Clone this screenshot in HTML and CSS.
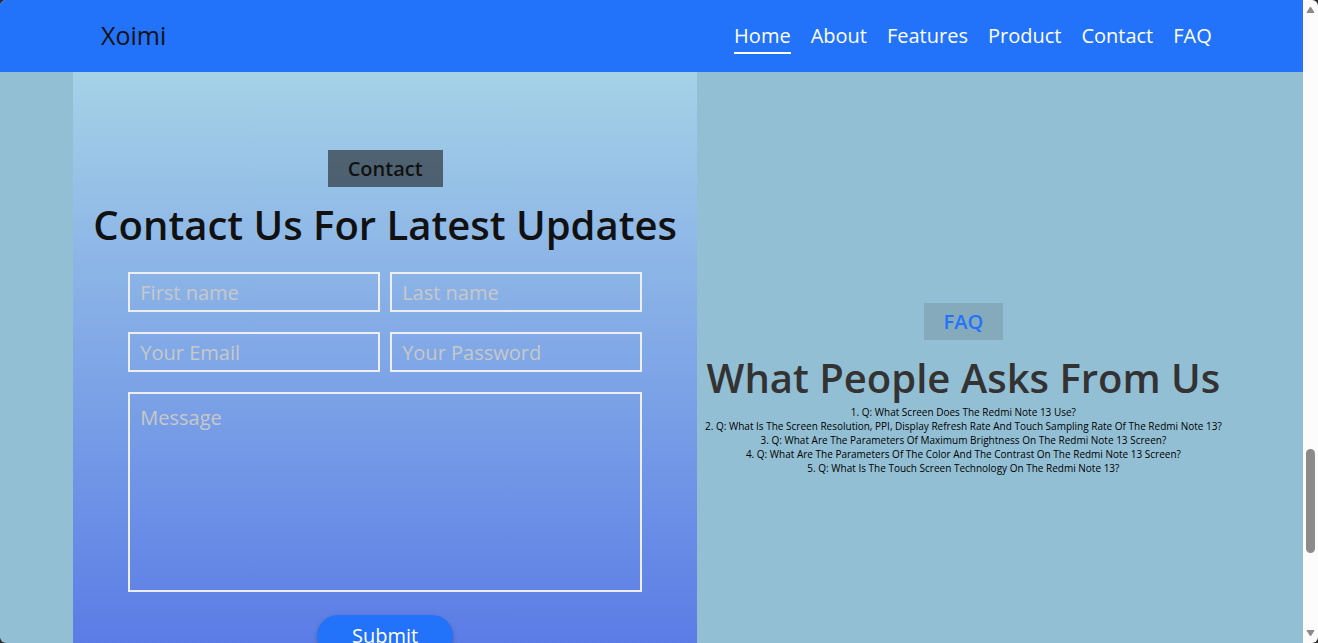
FILE: index.html
```html
<!DOCTYPE html>
<html lang="en">
<head>
<meta charset="utf-8">
<title>Xoimi</title>
<link rel="stylesheet" href="styles.css">
</head>
<body>
<div class="window">
  <div class="page">
    <header class="header">
      <a class="logo" href="#">Xoimi</a>
      <nav class="nav">
        <a class="nav-link active" href="#home">Home</a>
        <a class="nav-link" href="#about">About</a>
        <a class="nav-link" href="#features">Features</a>
        <a class="nav-link" href="#product">Product</a>
        <a class="nav-link" href="#contact">Contact</a>
        <a class="nav-link" href="#faq">FAQ</a>
      </nav>
    </header>
    <main class="main">
      <section class="contact" id="contact">
        <p class="tag tag-dark">Contact</p>
        <h2 class="title">Contact Us For Latest Updates</h2>
        <form class="form">
          <input class="field" type="text" placeholder="First name" aria-label="First name">
          <input class="field" type="text" placeholder="Last name" aria-label="Last name">
          <input class="field" type="email" placeholder="Your Email" aria-label="Your Email">
          <input class="field" type="password" placeholder="Your Password" aria-label="Your Password">
          <textarea class="field message" placeholder="Message" aria-label="Message"></textarea>
          <button class="submit" type="submit">Submit</button>
        </form>
      </section>
      <section class="faq" id="faq">
        <p class="tag tag-light">FAQ</p>
        <h2 class="title title-soft">What People Asks From Us</h2>
        <ul class="questions">
          <li>1. Q: What Screen Does The Redmi Note 13 Use?</li>
          <li>2. Q: What Is The Screen Resolution, PPI, Display Refresh Rate And Touch Sampling Rate Of The Redmi Note 13?</li>
          <li>3. Q: What Are The Parameters Of Maximum Brightness On The Redmi Note 13 Screen?</li>
          <li>4. Q: What Are The Parameters Of The Color And The Contrast On The Redmi Note 13 Screen?</li>
          <li>5. Q: What Is The Touch Screen Technology On The Redmi Note 13?</li>
        </ul>
      </section>
    </main>
  </div>
  <div class="scrollbar" aria-hidden="true">
    <svg class="arrow" viewBox="0 0 9 8"><path d="M4.5 1 8 6.5H1Z" fill="#8b8b8b" stroke="#8b8b8b" stroke-linejoin="round"/></svg>
    <div class="track"><div class="thumb"></div></div>
    <svg class="arrow" viewBox="0 0 9 8"><path d="M4.5 7 1 1.5H8Z" fill="#8b8b8b" stroke="#8b8b8b" stroke-linejoin="round"/></svg>
  </div>
</div>
</body>
</html>
```
FILE: styles.css
```css
* {
  box-sizing: border-box;
  margin: 0;
  padding: 0;
}

body {
  background: #2b2b2b;
  font-family: "Open Sans", sans-serif;
  font-size: 20px;
  overflow: hidden;
}

a {
  text-decoration: none;
}

.window {
  display: grid;
  grid-template-columns: minmax(0, 1fr) 15px;
  height: 100vh;
  border-radius: 6px;
  overflow: hidden;
}

.page {
  display: flex;
  flex-direction: column;
  min-height: 0;
  overflow: hidden;
  background: #93bfd4;
}

.header {
  display: flex;
  flex: none;
  align-items: center;
  justify-content: space-between;
  height: 72px;
  padding: 0 7%;
  padding-left: 101px;
  background: #2273f9;
}

.logo {
  padding-bottom: 2px;
  color: #111;
  font-size: 25px;
}

.nav {
  display: flex;
  gap: 20px;
}

.nav-link {
  padding: 2px 0;
  border-bottom: 2px solid transparent;
  border-top: 2px solid transparent;
  color: #fff;
  line-height: 28px;
}

.nav-link.active {
  border-bottom-color: #fff;
}

.main {
  display: flex;
  flex: none;
  justify-content: center;
}

.contact {
  display: flex;
  flex-direction: column;
  align-items: center;
  padding: 78px 20px 48px;
  background: linear-gradient(#a5d2e7, #5373e6);
}

.faq {
  display: flex;
  flex-direction: column;
  align-items: center;
  justify-content: center;
  padding: 0 8px;
}

.tag {
  padding: 5px 20px;
  font-weight: 600;
  line-height: 27px;
}

.tag-dark {
  background: rgba(17, 17, 17, 0.55);
  color: #111;
}

.tag-light {
  background: rgba(51, 51, 51, 0.15);
  color: #2273f9;
}

.title {
  margin-top: 10px;
  color: #111;
  font-size: 40px;
  font-weight: 600;
  line-height: 55px;
}

.title-soft {
  color: #333;
}

.form {
  display: grid;
  grid-template-columns: 1fr 1fr;
  gap: 20px 10px;
  width: 88%;
  margin-top: 20px;
}

.field {
  width: 100%;
  min-width: 0;
  height: 40px;
  padding: 0 10px;
  border: 2px solid #eee;
  background: transparent;
  color: #eee;
  font: inherit;
  outline: none;
}

.field::placeholder {
  color: #c8c8c8;
  opacity: 1;
}

.message {
  grid-column: 1 / -1;
  height: 200px;
  padding: 10px;
  resize: none;
}

.submit {
  grid-column: 1 / -1;
  justify-self: center;
  margin-top: 3px;
  padding: 7px 35px;
  border: 0;
  border-radius: 30px;
  background: #2273f9;
  box-shadow: 0 2px 4px rgba(51, 51, 51, 0.4);
  color: #fff;
  font: inherit;
  line-height: 28px;
}

.questions {
  color: #000;
  font-size: 10px;
  line-height: 14px;
  list-style: none;
  text-align: center;
}

.scrollbar {
  display: flex;
  flex-direction: column;
  align-items: center;
  padding: 6px 0;
  background: #fcfcfc;
}

.arrow {
  width: 9px;
  height: 8px;
}

.track {
  flex: 1;
  width: 9px;
  padding-top: 435px;
}

.thumb {
  height: 104px;
  border-radius: 5px;
  background: #8b8b8b;
}
```
